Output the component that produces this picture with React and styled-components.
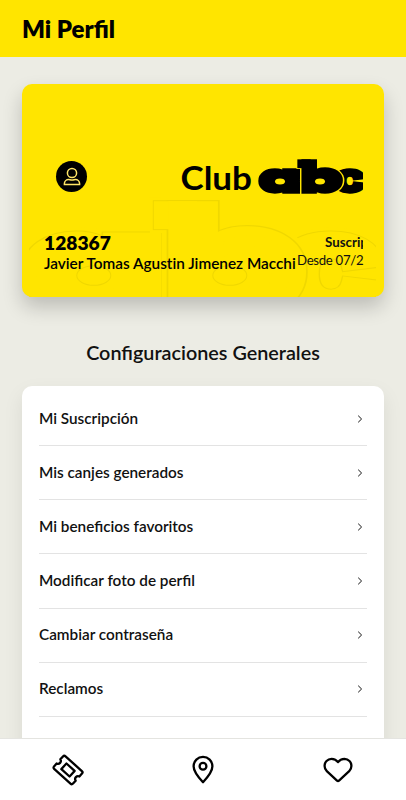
/* eslint-disable react/prop-types */
import React from "react";
import { styled, createGlobalStyle } from "styled-components";

const GlobalStyle = createGlobalStyle`
  * {
    box-sizing: border-box;
  }

  body {
    margin: 0;
    overflow: hidden;
    background-color: #ecece4;
    color: #111;
    font-family: Lato, "Liberation Sans", sans-serif;
  }
`;

const Screen = styled.div`
  display: flex;
  flex-direction: column;
  height: 100vh;
`;

const Header = styled.header`
  display: flex;
  align-items: center;
  flex: none;
  height: 57px;
  padding: 1px 22px 0;
  background-color: #ffe500;
`;

const PageTitle = styled.h1`
  margin: 0;
  font-weight: 800;
  font-size: 24px;
  line-height: 30px;
  color: #000;
`;

const Content = styled.main`
  flex: 1;
  min-height: 0;
  padding: 27px 22px 0;
  overflow: hidden;
`;

const MemberCard = styled.section`
  display: grid;
  height: 213px;
  border-radius: 10px;
  background-color: #ffe500;
  box-shadow: 0 10px 20px rgba(0, 0, 0, 0.2);
  overflow: hidden;

  & > * {
    grid-area: 1 / 1;
  }
`;

const CardBody = styled.div`
  display: flex;
  flex-direction: column;
  padding: 70px 21px 0 22px;
  min-width: 0;
  z-index: 1;
`;

const CardTop = styled.div`
  display: flex;
  justify-content: space-between;
  align-items: flex-start;
  height: 79px;
  padding-left: 12px;
`;

const Avatar = styled.div`
  display: flex;
  justify-content: center;
  align-items: center;
  width: 31px;
  height: 31px;
  margin-top: 7px;
  border-radius: 50%;
  background-color: #000;
`;

const CardInfo = styled.div`
  display: flex;
  justify-content: space-between;
  white-space: nowrap;
`;

const Member = styled.div`
  flex: none;
`;

const Number = styled.div`
  font-weight: 800;
  font-size: 19.2px;
  line-height: 20px;
  color: #000;
`;

const Name = styled.div`
  font-weight: 600;
  font-size: 15.35px;
  line-height: 20px;
  font-variant-ligatures: none;
  color: #000;
`;

const Subscription = styled.div`
  flex: none;
  width: 66px;
`;

const Plan = styled.div`
  width: 38px;
  margin-left: auto;
  overflow: hidden;
  font-weight: 700;
  font-size: 13.3px;
  line-height: 18px;
`;

const Since = styled.div`
  font-size: 13.2px;
  line-height: 18px;
  letter-spacing: -0.3px;
`;

const SectionTitle = styled.h2`
  margin: 42px 0 21px;
  font-weight: 600;
  font-size: 19.8px;
  line-height: 26px;
  text-align: center;
  white-space: nowrap;
`;

const Menu = styled.ul`
  height: 500px;
  margin: 0;
  padding: 6px 17px 0;
  list-style: none;
  border-radius: 10px;
  background-color: #fff;
  box-shadow: 0 8px 20px rgba(0, 0, 0, 0.08);
`;

const MenuItem = styled.li`
  display: flex;
  justify-content: space-between;
  align-items: center;
  height: 54.15px;
  padding-right: 2px;
  border-bottom: 1px solid #e3e3e3;
  font-weight: 600;
  font-size: 15.3px;
`;

const Label = styled.span`
  padding-bottom: 2px;
`;

const NavBar = styled.nav`
  display: flex;
  flex: none;
  height: 62px;
  border-top: 1px solid #e4e4e0;
  background-color: #fff;
  z-index: 2;
`;

const NavItem = styled.a`
  display: flex;
  flex: 1;
  justify-content: center;
  align-items: center;
  color: #000;
`;

const items = [
  "Mi Suscripción",
  "Mis canjes generados",
  "Mi beneficios favoritos",
  "Modificar foto de perfil",
  "Cambiar contraseña",
  "Reclamos",
];

// c goes under b, the bowl of b is cut out of it
const glyphs = [
  { char: "a", fontWeight: 900, transform: "translate(1 33) scale(1.62 1)", hole: 22 },
  { char: "c", fontWeight: 800, transform: "translate(75 33) scale(1.35 1)" },
  { char: "b", fontWeight: 700, transform: "translate(42 33) scale(1.7 1.06)", hole: 62 },
];

const Glyph = ({ glyph, color, weight }) => (
  <g fill={color} stroke={color} strokeWidth={weight}>
    {glyph.char === "b" && <rect x="41" y="2" width="10" height="5.500" />}
    {glyph.hole && (
      <ellipse cx={glyph.hole + 1} cy="22.500" rx="8" ry="7.500" />
    )}
    <text fontWeight={glyph.fontWeight} transform={glyph.transform}>
      {glyph.char}
    </text>
  </g>
);

const Letters = ({ outline }) => (
  <g
    fontFamily="Inter"
    fontSize="40"
    style={{ fontFeatureSettings: '"cv11"' }}
  >
    {glyphs.map((glyph) => (
      <React.Fragment key={glyph.char}>
        <Glyph glyph={glyph} color="#ffe500" weight={5} />
        <Glyph glyph={glyph} color={outline ? "#f0d800" : "#000"} weight={3.3} />
        {outline && <Glyph glyph={glyph} color="#ffe500" weight={2.7} />}
        {glyph.hole && (
          <ellipse
            cx={glyph.hole}
            cy="22.500"
            rx="5"
            ry="2.900"
            fill="#ffe500"
            stroke={outline ? "#f0d800" : "none"}
            strokeWidth="0.3"
          />
        )}
      </React.Fragment>
    ))}
  </g>
);

const ClubLogo = () => (
  <svg width="182" height="40" viewBox="0 0 182 40">
    <text
      x="-0.5"
      y="36"
      fontFamily="Lato"
      fontWeight="700"
      fontSize="32"
      textLength="71.500"
      lengthAdjust="spacingAndGlyphs"
    >
      Club
    </text>
    <g transform="translate(77 5)">
      <Letters />
    </g>
  </svg>
);

const Watermark = () => (
  <svg width="362" height="213" viewBox="22 84 362 213">
    <svg x="29" y="190" width="347" height="107" viewBox="29 190 347 107">
      <g transform="translate(19 199) scale(3.4)">
        <Letters outline />
      </g>
    </svg>
  </svg>
);

const Chevron = () => (
  <svg width="10" height="10" viewBox="0 0 10 10" fill="none" stroke="#111" strokeWidth="1">
    <path d="M3.2 1.7 6.6 5 3.2 8.3" />
  </svg>
);

const UserIcon = () => (
  <svg width="20" height="20" viewBox="0 0 20 20" fill="none" stroke="#ffe566" strokeWidth="1.5">
    <circle cx="10" cy="6" r="4.6" />
    <path d="M2.4 17.6v-1a4.2 4.2 0 0 1 4.2-4.1c1 0 1.800.6 3.400.6s2.400-.6 3.400-.6a4.200 4.200 0 0 1 4.200 4.100v1z" />
  </svg>
);

const TicketIcon = () => (
  <svg width="32" height="32" viewBox="0 0 32 32" fill="none" stroke="#000" strokeWidth="2.3" strokeLinejoin="round">
    <g transform="rotate(42 16 16)">
      <path d="M5 7.500h22a1.800 1.800 0 0 1 1.800 1.800v3.900a2.900 2.900 0 0 0 0 5.600v3.900a1.800 1.800 0 0 1-1.800 1.800h-22a1.800 1.800 0 0 1-1.800-1.800v-3.900a2.900 2.900 0 0 0 0-5.600V9.300a1.800 1.800 0 0 1 1.800-1.800z" />
      <path d="M10.500 12.200h11v7.600h-11z" />
    </g>
  </svg>
);

const PinIcon = () => (
  <svg width="32" height="32" viewBox="0 0 32 32" fill="none" stroke="#000" strokeWidth="2.3" strokeLinejoin="round">
    <path d="M16 28.200C12 24 6.600 18 6.600 12.300a9.400 9.400 0 0 1 18.800 0c0 5.700-5.400 11.700-9.400 15.900z" />
    <circle cx="16" cy="12.300" r="3.400" />
  </svg>
);

const HeartIcon = () => (
  <svg width="32" height="32" viewBox="0 0 32 32" fill="none" stroke="#000" strokeWidth="2.3" strokeLinejoin="round">
    <path d="M22.500 4.800c-2.900 0-5.100 1.300-6.500 3.300-1.400-2-3.600-3.300-6.500-3.300a7 7 0 0 0-6.900 7.200c0 2 .8 3.900 2.200 5.200l10.200 9.500a1.500 1.500 0 0 0 2 0l10.200-9.500a7.300 7.300 0 0 0 2.200-5.200 7 7 0 0 0-6.900-7.200z" />
  </svg>
);

const App = () => {
  return (
    <>
      <GlobalStyle />
      <Screen>
        <Header>
          <PageTitle>Mi Perfil</PageTitle>
        </Header>
        <Content>
          <MemberCard>
            <Watermark />
            <CardBody>
              <CardTop>
                <Avatar>
                  <UserIcon />
                </Avatar>
                <ClubLogo />
              </CardTop>
              <CardInfo>
                <Member>
                  <Number>128367</Number>
                  <Name>Javier Tomas Agustin Jimenez Macchi</Name>
                </Member>
                <Subscription>
                  <Plan>Suscrip</Plan>
                  <Since>Desde 07/2</Since>
                </Subscription>
              </CardInfo>
            </CardBody>
          </MemberCard>
          <SectionTitle>Configuraciones Generales</SectionTitle>
          <Menu>
            {items.map((item) => (
              <MenuItem key={item}>
                <Label>{item}</Label>
                <Chevron />
              </MenuItem>
            ))}
          </Menu>
        </Content>
        <NavBar>
          <NavItem>
            <TicketIcon />
          </NavItem>
          <NavItem>
            <PinIcon />
          </NavItem>
          <NavItem>
            <HeartIcon />
          </NavItem>
        </NavBar>
      </Screen>
    </>
  );
};

export default App;
